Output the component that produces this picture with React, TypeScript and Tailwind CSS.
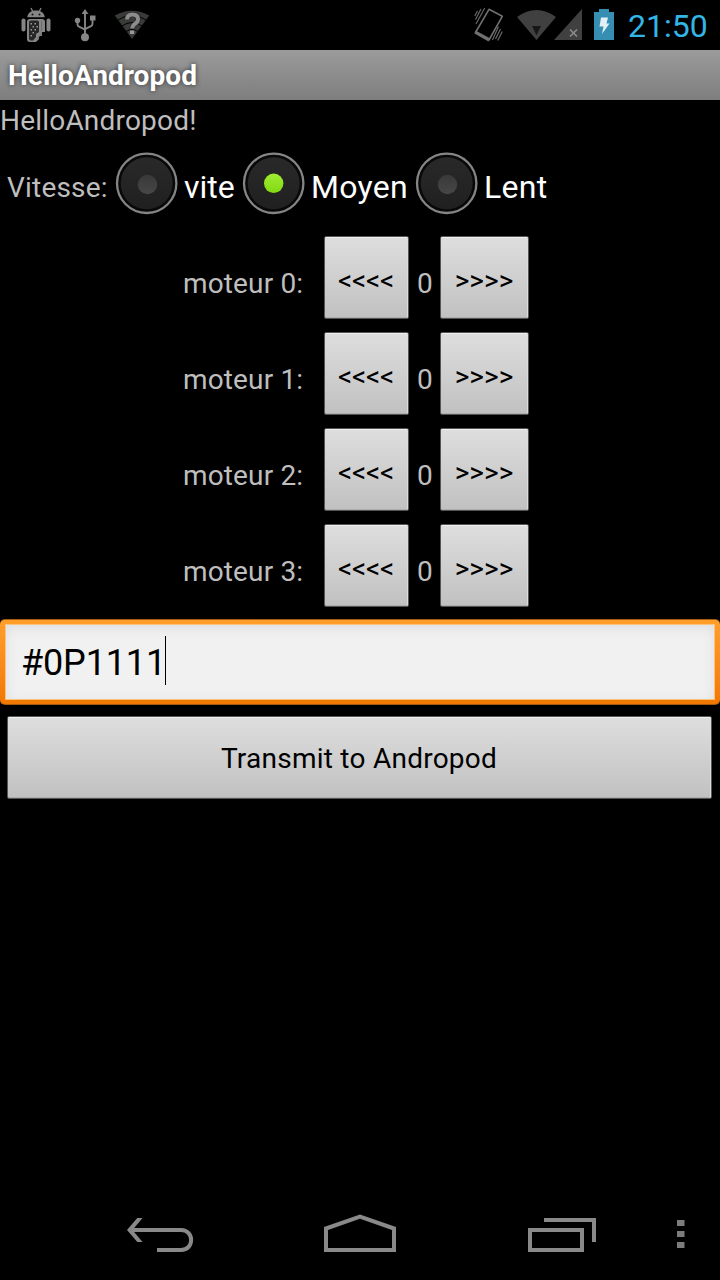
import React from 'react';

const motors = [0, 1, 2, 3];

function AndroidIcon() {
  return (
    <svg width="32" height="36" viewBox="0 0 32 36" className="ml-5 mt-[7px] shrink-0">
      <g fill="#858585">
        <path d="M7.3 10.200C7.6 6 11 3.500 16 3.500s8.400 2.500 8.700 6.700z" />
        <rect x="1.500" y="11.500" width="4" height="13" rx="2" />
        <rect x="26.500" y="11.500" width="4" height="13" rx="2" />
        <path d="M10 12h12q3 0 3 3v10h-3v4h-3v3l-3 3h-6q-3 0-3-3V15q0-3 3-3z" />
      </g>
      <path d="M11 1l2 4M21 1l-2 4" stroke="#858585" strokeWidth="1.300" />
      <path d="M11 13.500h6q2 0 2 2v9.500l-3 2v3l-3 3.500h-2q-2 0-2-2v-16q0-2 2-2z" fill="#262626" />
      <g fill="#999">
        <rect x="10.500" y="16" width="1.500" height="1.500" /><rect x="14.500" y="16" width="1.500" height="1.500" />
        <rect x="12.500" y="19" width="1.500" height="1.500" /><rect x="16.500" y="19" width="1.500" height="1.500" />
        <rect x="10.500" y="22" width="1.500" height="1.500" /><rect x="14.500" y="22" width="1.500" height="1.500" />
        <rect x="12.500" y="25" width="1.500" height="1.500" /><rect x="10.500" y="28" width="1.500" height="1.500" />
      </g>
      <path d="M21.500 14v10M17 32l5-6" stroke="#6e6e6e" strokeWidth="1" />
      <g fill="#161616"><circle cx="12.500" cy="7.500" r="1" /><circle cx="19.500" cy="7.500" r="1" /></g>
    </svg>
  );
}

function UsbIcon() {
  return (
    <svg width="24" height="36" viewBox="0 0 24 36" className="ml-[22px] mt-[7px] shrink-0">
      <g fill="none" stroke="#858585" strokeWidth="1.900">
        <path d="M11 5v24M3.500 14v3.500q0 1.500 1.500 2.200l6 3M18.500 12v5q0 1.500-1.500 2.200l-6 3" />
      </g>
      <g fill="#858585">
        <path d="M11 2l3.400 5H7.600z" />
        <circle cx="3.500" cy="13.500" r="2.700" />
        <rect x="16" y="8.500" width="5.500" height="5" />
        <circle cx="11" cy="30.300" r="4" />
      </g>
    </svg>
  );
}

function WifiQueryIcon() {
  return (
    <svg width="36" height="36" viewBox="0 0 36 36" className="ml-4 mt-[7px] shrink-0">
      <path d="M18 32L.800 8.500Q18-1 35.200 8.500z" fill="#393b39" />
      <path d="M4 13Q18 3.500 32 13M8 19q10-7 20 0M12 24.500q6-4 12 0" fill="none" stroke="#000" strokeWidth="1" />
      <path d="M13 12.500q0-5 5.500-5t5.500 4.500q0 3-3 4.800-2.700 1.800-2.700 4.700" fill="none" stroke="#222" strokeWidth="5.200" />
      <path d="M13 12.500q0-5 5.500-5t5.500 4.500q0 3-3 4.800-2.700 1.800-2.700 4.700" fill="none" stroke="#8c8c8c" strokeWidth="4" />
      <rect x="16" y="23.500" width="4.200" height="3.500" fill="#999" />
    </svg>
  );
}

function VibrateIcon() {
  return (
    <svg width="30" height="36" viewBox="0 0 30 36" className="mt-[7px] shrink-0">
      <path d="M15 2.300L28.300 9.300 15 33 1.500 25.500z" fill="none" stroke="#707070" strokeWidth="1.600" strokeLinejoin="round" />
      <path d="M1.500 23.500l14 7.500-1 3.500L.500 26.500z" fill="#707070" />
      <path d="M10.700 1L2 17M7 2L1.500 12.500M3.500 4L.700 9M28.300 24.500l-4.600 9M24.500 19.500L18.500 33M26.500 22l-5 10" stroke="#686868" strokeWidth="1.200" />
    </svg>
  );
}

function SignalIcons() {
  return (
    <svg width="66" height="36" viewBox="0 0 66 36" className="ml-[13px] mt-[7px] shrink-0">
      <path d="M19.500 33L0 10Q19.500-4 39 10z" fill="#404040" />
      <path d="M15 19h9l-4.500 9.300z" fill="#171717" />
      <path d="M37 33L65 2v31z" fill="#404040" />
      <path d="M53 22.500l7 7M60 22.500l-7 7" stroke="#8b8b8b" strokeWidth="1.700" />
    </svg>
  );
}

function BatteryIcon() {
  return (
    <svg width="20" height="36" viewBox="0 0 20 36" className="ml-[11px] mt-[7px] shrink-0">
      <path d="M0 5h5V2h10v3h5v28H0z" fill="#368eb3" />
      <path d="M7 10.500h7l-1.500 6h3L8 27l1.500-7.500H5.500z" fill="#e3f0f5" />
    </svg>
  );
}

function StatusBar() {
  return (
    <div className="flex h-[50px] w-full">
      <AndroidIcon />
      <UsbIcon />
      <WifiQueryIcon />
      <div className="ml-auto flex">
        <VibrateIcon />
        <SignalIcons />
        <BatteryIcon />
        <span className="ml-[14px] mt-[7px] w-[92px] whitespace-nowrap text-[32px] leading-[38px] text-[#33b5e5]">21:50</span>
      </div>
    </div>
  );
}

function Radio({ checked }: { checked?: boolean }) {
  return (
    <svg width="64" height="64" viewBox="0 0 64 64" className="shrink-0">
      <defs>
        <linearGradient id="dial" x1="0" y1="0" x2="0" y2="1"><stop stopColor="#292929" /><stop offset="1" stopColor="#202020" /></linearGradient>
        <linearGradient id="lit" x1="0" y1="0" x2="0" y2="1"><stop stopColor="#a2ec32" /><stop offset="1" stopColor="#80d912" /></linearGradient>
        <linearGradient id="unlit" x1="0" y1="0" x2="0" y2="1"><stop stopColor="#393939" /><stop offset="1" stopColor="#474747" /></linearGradient>
      </defs>
      <circle cx="31.700" cy="32.300" r="29.700" fill="#080808" stroke="#858585" strokeWidth="2.300" />
      <circle cx="31.700" cy="32.300" r="26" fill="url(#dial)" />
      {checked ? <circle cx="31.700" cy="32.300" r="9.700" fill="url(#lit)" /> : <circle cx="32.500" cy="33.500" r="9.700" fill="url(#unlit)" />}
    </svg>
  );
}

function Button({ label, className, textClass }: { label: string; className: string; textClass: string }) {
  return (
    <button className={`flex shrink-0 justify-center rounded-[2px] border border-[#555] bg-linear-to-b from-[#dedede] to-[#c1c1c1] text-[28px] leading-[33px] text-black shadow-[inset_0_1px_0_#efefef,inset_-1px_0_0_#dcdcdc,inset_0_-1px_0_#adadad] ${className}`}>
      <span className={`whitespace-nowrap ${textClass}`}>{label}</span>
    </button>
  );
}

function NavBar() {
  return (
    <div className="flex h-[96px] w-full">
      <svg width="720" height="96" viewBox="0 1184 720 96" fill="none" stroke="#898989" strokeWidth="4">
        <path d="M130 1230h51c13.500 0 13.500 20 0 20h-24" />
        <path d="M137.300 1218h5.200l-10 12 10 12h-5.200l-10.300-12z" fill="#898989" stroke="none" />
        <path d="M326 1250v-21.500l34-12 34 12V1250z" />
        <path d="M530 1230h52v20h-52zM544 1220h50v22" />
        <path d="M677 1220h7.500v6h-7.500zM677 1231h7.500v6h-7.500zM677 1242h7.500v6h-7.500z" fill="#7c7c7c" stroke="none" />
      </svg>
    </div>
  );
}

export default function App() {
  return (
    <main className="flex h-[1280px] w-[720px] flex-col overflow-hidden bg-black font-['Roboto',sans-serif] text-[28px] leading-[33px] text-[#bebebe]">
      <StatusBar />
      <header className="h-[50px] bg-linear-to-b from-[#9b9b9b] to-[#7e7e7e] pl-2 pt-[9px] font-bold text-white [text-shadow:0_0_5px_#333]">
        <span className="tracking-[0.05px]">HelloAndropod</span>
      </header>
      <p className="h-[51px] pt-1 tracking-[0.2px]">HelloAndropod!</p>
      <section className="flex h-[79px]">
        <span className="ml-[7px] mt-5 w-[108px] whitespace-nowrap tracking-[0.2px]">Vitesse:</span>
        <Radio />
        <span className="ml-[5px] mt-[17px] w-[58px] whitespace-nowrap text-[32px] leading-[38px] text-white">vite</span>
        <Radio checked />
        <span className="ml-[5px] mt-[17px] w-[104px] whitespace-nowrap text-[32px] leading-[38px] tracking-[0.3px] text-white">Moyen</span>
        <Radio />
        <span className="ml-[5px] mt-[17px] whitespace-nowrap text-[32px] leading-[38px] tracking-[0.25px] text-white">Lent</span>
      </section>
      <section className="flex h-[389px] flex-col pt-[6px]">
        {motors.map((n) => (
          <div key={n} className="flex h-24 shrink-0">
            <span className="ml-[183px] mt-[31px] w-[141px] whitespace-nowrap tracking-[0.14px]">moteur {n}:</span>
            <Button label="<<<<" className="h-[83px] w-[85px] pt-[27px]" textClass="tracking-[-0.2px] -ml-px" />
            <span className="mt-[31px] w-[31px] pl-2">0</span>
            <Button label=">>>>" className="h-[83px] w-[89px] pt-[27px]" textClass="tracking-[0px] -ml-px" />
          </div>
        ))}
      </section>
      <div className="h-[86px] shrink-0 rounded-[5px] border-y border-[#a35a10] bg-linear-to-b from-[#ff9f2b] to-[#f17800] px-[5px] py-1">
        <div className="flex h-[76px] border border-[#ffc27c] bg-[#f1f1f1] pl-[15px] pt-[11px] shadow-[inset_0_3px_12px_#dedede]">
          <span className="mt-[6px] w-[144px] whitespace-nowrap text-[36px] leading-[42px] tracking-[-0.15px] text-black">#0P1111</span>
          <span className="h-[49px] w-px bg-black" />
        </div>
      </div>
      <Button label="Transmit to Andropod" className="ml-[7px] mt-[11px] h-[83px] w-[705px] pt-[25px]" textClass="tracking-[0.25px] -ml-px" />
      <div className="flex-1" />
      <NavBar />
    </main>
  );
}
